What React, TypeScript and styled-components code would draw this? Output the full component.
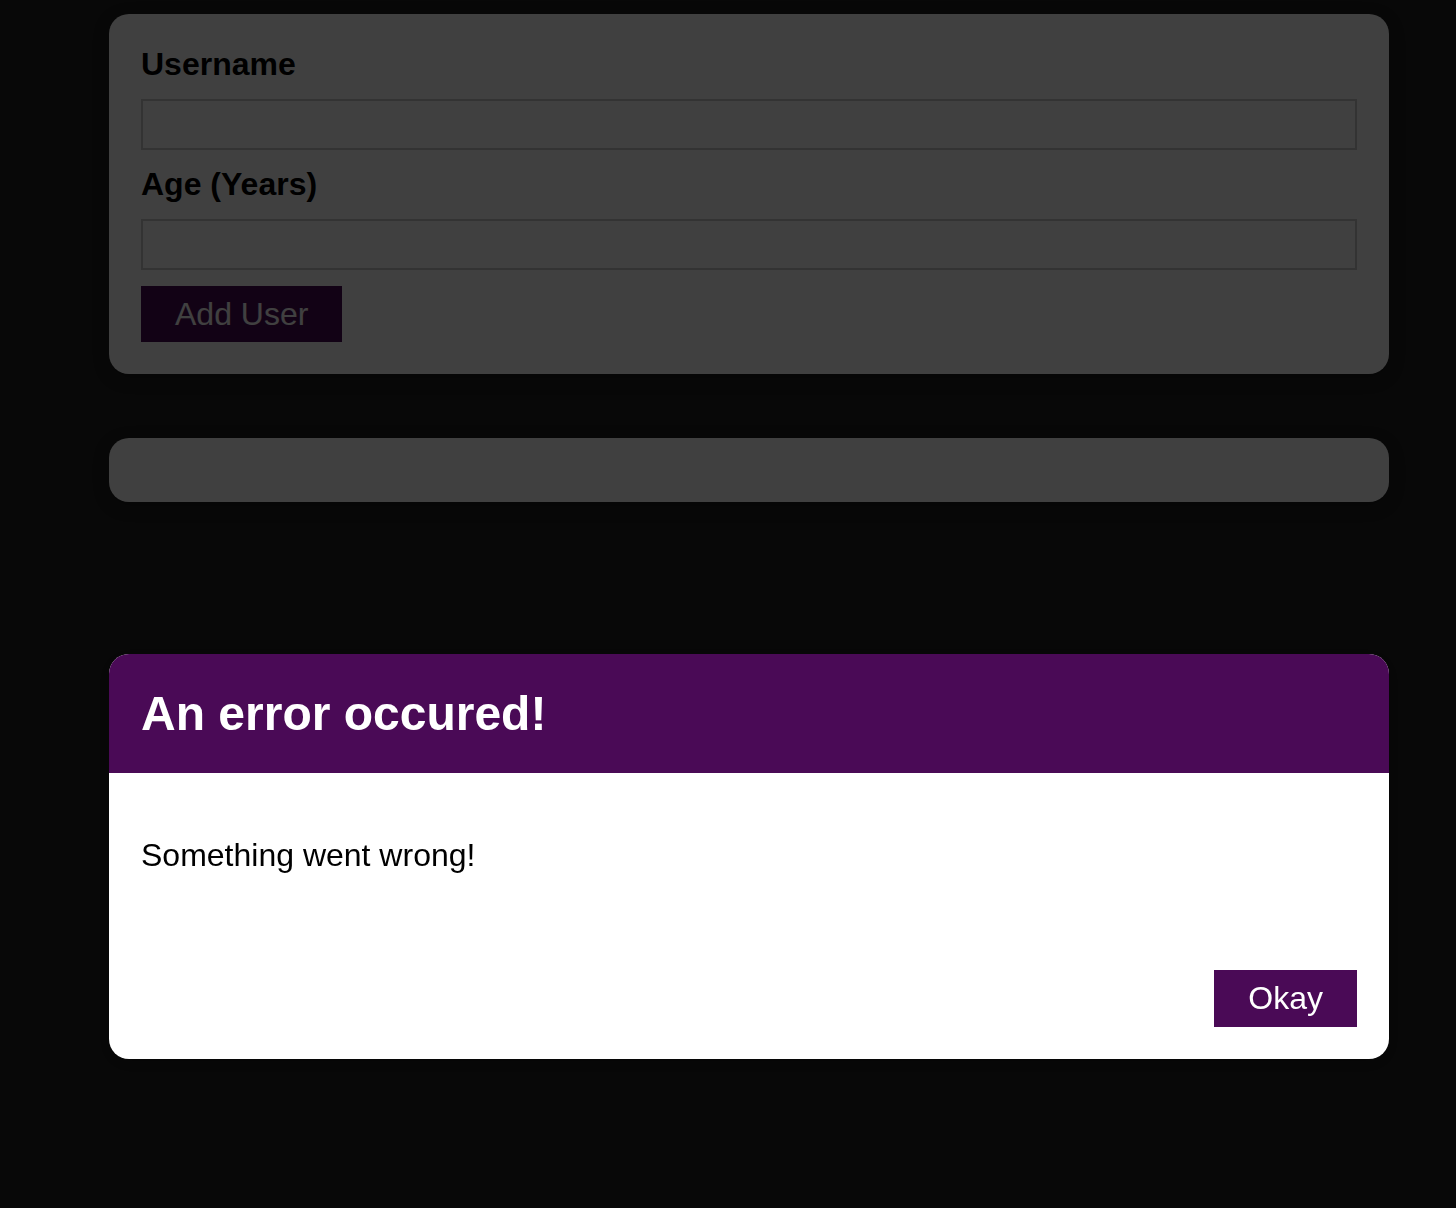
import React, {FC} from "react";
import styled, {createGlobalStyle} from "styled-components";

const Colors = {
    page: "#202020",
    white: "#ffffff",
    purple: "#4a0a56",
    border: "#cccccc",
    black: "#000000",
};

const GlobalStyle = createGlobalStyle`
  * {
    box-sizing: border-box;
  }
  html, body {
    margin: 0;
    padding: 0;
    background-color: ${Colors.page};
    font-family: "Liberation Sans", Arial, Helvetica, sans-serif;
  }
`;

const Page = styled.div`
  min-height: 1208px;
  padding: 14px 0 0 109px;
  display: flex;
  flex-direction: column;
  gap: 64px;
`;

const Card = styled.div<{$height?: number}>`
  width: 1280px;
  background-color: ${Colors.white};
  border-radius: 20px;
  box-shadow: 0 4px 16px rgba(0, 0, 0, 0.26);
  padding: 32px;
  ${({$height}) => $height ? `height: ${$height}px;` : ""}
`;

const Form = styled.form`
  display: flex;
  flex-direction: column;
`;

const Label = styled.label`
  display: block;
  font-weight: bold;
  font-size: 32px;
  line-height: 36.8px;
  margin-bottom: 16px;
  color: ${Colors.black};
`;

const Input = styled.input`
  display: block;
  width: 100%;
  height: 51px;
  font: inherit;
  font-size: 32px;
  border: 2px solid ${Colors.border};
  padding: 4px;
  margin: 0 0 16px 0;
  background-color: ${Colors.white};
`;

const Button = styled.button`
  font: inherit;
  font-size: 32px;
  line-height: 36.8px;
  border: 2px solid ${Colors.purple};
  background-color: ${Colors.purple};
  color: ${Colors.white};
  padding: 8px 32px;
  cursor: pointer;
  align-self: flex-start;
`;

const Backdrop = styled.div`
  position: fixed;
  top: 0;
  left: 0;
  width: 100%;
  height: 100vh;
  z-index: 10;
  background: rgba(0, 0, 0, 0.75);
`;

const Modal = styled.div`
  position: fixed;
  top: 654px;
  left: 109px;
  width: 1280px;
  z-index: 100;
  overflow: hidden;
  border-radius: 20px;
  background-color: ${Colors.white};
  box-shadow: 0 4px 16px rgba(0, 0, 0, 0.26);
`;

const ModalHeader = styled.header`
  background: ${Colors.purple};
  padding: 32px;
  h2 {
    margin: 0;
    color: ${Colors.white};
    font-size: 48px;
    line-height: 55px;
    font-weight: bold;
  }
`;

const ModalContent = styled.div`
  padding: 32px;
  p {
    margin: 32px 0;
    font-size: 32px;
    line-height: 37px;
    color: ${Colors.black};
  }
`;

const ModalActions = styled.footer`
  padding: 32px;
  display: flex;
  justify-content: flex-end;
`;

const ErrorModal: FC<{title: string, message: string}> = ({title, message}) => (
    <>
        <Backdrop/>
        <Modal>
            <ModalHeader>
                <h2>{title}</h2>
            </ModalHeader>
            <ModalContent>
                <p>{message}</p>
            </ModalContent>
            <ModalActions>
                <Button type="button">Okay</Button>
            </ModalActions>
        </Modal>
    </>
);

const App: FC = () => {
    return (
        <>
            <GlobalStyle/>
            <ErrorModal title="An error occured!" message="Something went wrong!"/>
            <Page>
                <Card>
                    <Form onSubmit={(e) => e.preventDefault()}>
                        <Label htmlFor="username">Username</Label>
                        <Input id="username" type="text"/>
                        <Label htmlFor="age">Age (Years)</Label>
                        <Input id="age" type="number"/>
                        <Button type="submit">Add User</Button>
                    </Form>
                </Card>
                <Card $height={63}/>
            </Page>
        </>
    );
};

export default App;
